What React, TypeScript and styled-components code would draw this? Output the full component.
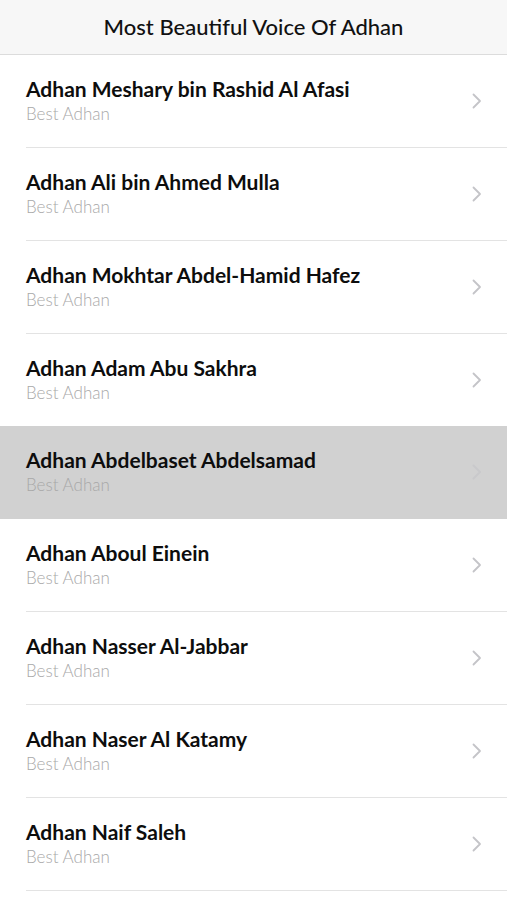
import styled, { createGlobalStyle } from 'styled-components';

const names = [
  'Adhan Meshary bin Rashid Al Afasi',
  'Adhan Ali bin Ahmed Mulla',
  'Adhan Mokhtar Abdel-Hamid Hafez',
  'Adhan Adam Abu Sakhra',
  'Adhan Abdelbaset Abdelsamad',
  'Adhan Aboul Einein',
  'Adhan Nasser Al-Jabbar',
  'Adhan Naser Al Katamy',
  'Adhan Naif Saleh',
];

const Chevron = () => (
  <svg width="10" height="16" viewBox="0 0 10 16" fill="none">
    <path d="M1.5 1.5 L8 8 L1.5 14.5" stroke="#c4c4c8" strokeWidth="1.8" strokeLinecap="round" strokeLinejoin="round" />
  </svg>
);

const App = () => {
  return (
    <>
      <GlobalStyle />
      <Screen>
        <NavBar>Most Beautiful Voice Of Adhan</NavBar>
        <List>
          {names.map((name, i) => (
            <Row key={name} $active={i === 4}>
              <RowInner $active={i === 4}>
                <Texts>
                  <Title>{name}</Title>
                  <Subtitle>Best Adhan</Subtitle>
                </Texts>
                <ChevronBox $active={i === 4}>
                  <Chevron />
                </ChevronBox>
              </RowInner>
            </Row>
          ))}
        </List>
      </Screen>
    </>
  );
};

export default App;

const GlobalStyle = createGlobalStyle`
  html, body {
    margin: 0;
    padding: 0;
    background: #ffffff;
    overflow: hidden;
  }
  * {
    box-sizing: border-box;
  }
`;

const Screen = styled.div`
  width: 507px;
  height: 900px;
  overflow: hidden;
  background: #ffffff;
  font-family: Lato, 'Noto Sans', sans-serif;
`;

const NavBar = styled.div`
  height: 55px;
  background: #f7f7f7;
  border-bottom: 1px solid #dcdcdc;
  display: flex;
  align-items: center;
  justify-content: center;
  font-size: 22px;
  font-weight: 500;
  color: #111111;
  padding-bottom: 1px;
`;

const List = styled.div`
  display: flex;
  flex-direction: column;
`;

const Row = styled.div<{ $active?: boolean }>`
  height: 93px;
  padding-left: 26px;
  background: ${(p) => (p.$active ? '#d1d1d1' : '#ffffff')};
  margin-top: ${(p) => (p.$active ? '-1px' : '0')};
`;

const RowInner = styled.div<{ $active?: boolean }>`
  height: 100%;
  display: flex;
  align-items: center;
  padding-right: 25px;
  border-bottom: 1px solid ${(p) => (p.$active ? 'transparent' : '#e3e3e3')};
`;

const Texts = styled.div`
  flex: 1;
  display: flex;
  flex-direction: column;
  gap: 4px;
  padding-bottom: 2px;
`;

const Title = styled.div`
  font-size: 21px;
  font-weight: 700;
  color: #0d0d0d;
  line-height: 23px;
`;

const Subtitle = styled.div`
  font-size: 17px;
  font-weight: 300;
  color: #a8a8a8;
  line-height: 20px;
`;

const ChevronBox = styled.div<{ $active?: boolean }>`
  display: flex;
  align-items: center;
  opacity: ${(p) => (p.$active ? 0.6 : 1)};
`;
